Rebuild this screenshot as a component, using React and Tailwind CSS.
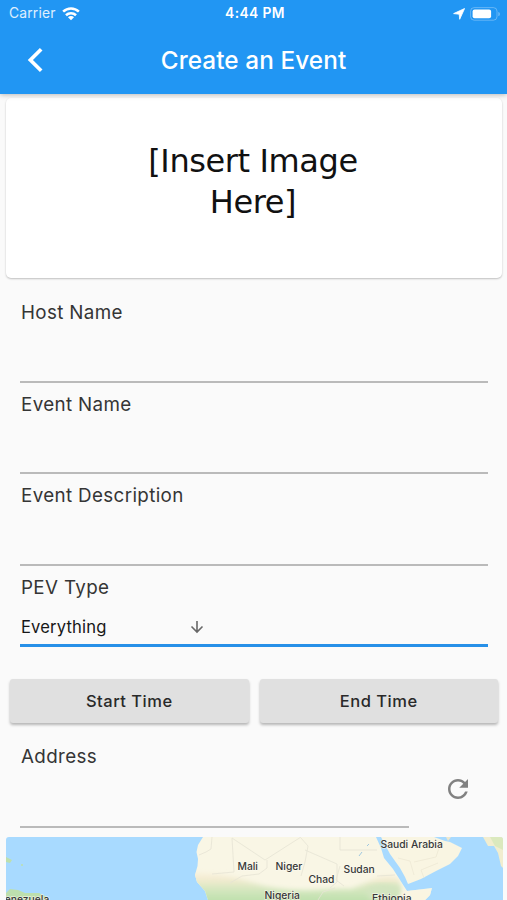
import React from "react";

function StatusBar() {
  return (
    <div className="flex h-[27px] items-center px-[9px] text-[13.8px] text-white">
      <div className="flex flex-1 items-center gap-[6px]">
        <span className="tracking-[0.2px] text-white/85">Carrier</span>
        <svg width="18" height="15" viewBox="0 0 19 15" fill="none" stroke="white" strokeWidth="2.7">
          <path d="M1.2 5.6a12 12 0 0 1 16.600 0" />
          <path d="M4.200 9.300a7.700 7.700 0 0 1 10.600 0" />
          <path d="M9.500 14.600 6.300 11.500a4.500 4.500 0 0 1 6.400 0Z" fill="white" stroke="none" />
        </svg>
      </div>
      <span className="text-[13.8px] font-semibold tracking-[0.4px]">4:44 PM</span>
      <div className="flex flex-1 items-center justify-end gap-[5px] -mr-[3px]">
        <svg width="12" height="12" viewBox="0 0 12 12">
          <path d="M11.6.5 6.700 11.300 6.200 6.200.6 5.600Z" fill="white" stroke="white" strokeWidth=".8" strokeLinejoin="round" />
        </svg>
        <svg width="31" height="14" viewBox="0 0 31 14">
          <rect x=".6" y=".6" width="26.4" height="12.6" rx="3.6" fill="none" stroke="white" strokeOpacity=".3" />
          <rect x="2.6" y="2.5" width="18.5" height="8.8" rx="2" fill="white" />
          <path d="M28.400 4.900v4.200c1.900-.5 1.900-3.700 0-4.200Z" fill="white" fillOpacity=".4" />
        </svg>
      </div>
    </div>
  );
}

function Header() {
  return (
    <header className="relative z-10 h-[94px] bg-[#2196f3] shadow-[0_1px_5px_rgba(0,0,0,0.26)]">
      <StatusBar />
      <div className="flex h-[66px] items-center text-white">
        <svg className="ml-[27px]" width="17" height="26" viewBox="0 0 17 26" fill="none" stroke="white" strokeWidth="3.7">
          <path d="M14.200 2.300 3.400 13l10.800 10.700" />
        </svg>
        <h1 className="flex-1 pr-[44px] text-center text-[24.3px] font-medium tracking-[0.1px]">Create an Event</h1>
      </div>
    </header>
  );
}

function Label({ children }) {
  return (
    <span className="mt-[8px] block pl-px text-[18.8px] leading-[27px] tracking-[0.36px] text-[#353535]">{children}</span>
  );
}

function Field({ label }) {
  return (
    <label className="flex h-[91.7px] flex-col border-b-2 border-[#bababa]">
      <Label>{label}</Label>
    </label>
  );
}

function RaisedButton({ children }) {
  return (
    <button className="h-[44px] flex-1 rounded-[3px] bg-[#e0e0e0] text-[16.5px] font-medium tracking-[0.5px] text-[#292929] shadow-[0_2px_3px_rgba(0,0,0,0.28)]">
      {children}
    </button>
  );
}

function WorldMap() {
  return (
    <svg className="ml-[6px] block rounded-t-[3px]" width="497" height="63" viewBox="6 837 497 63">
      <defs>
        <linearGradient id="savanna" x1="0" y1="870" x2="0" y2="900" gradientUnits="userSpaceOnUse">
          <stop offset="0" stopColor="#f9f5e3" />
          <stop offset=".3" stopColor="#f4ebd1" />
          <stop offset=".65" stopColor="#d5e7bf" />
          <stop offset="1" stopColor="#bfe0ae" />
        </linearGradient>
        <filter id="soften"><feGaussianBlur stdDeviation="2.5" /></filter>
        <clipPath id="africa">
          <path d="M203 837 198 845 196.500 852 198 859 197.500 866 195 875 197 882 205 891 208 900H425L430 895 432 888 407 891 400 880 393 869 384 858 381 848 376 837Z" />
        </clipPath>
      </defs>
      <rect x="6" y="837" width="497" height="63" fill="#a8daff" />
      <g clipPath="url(#africa)">
        <rect x="190" y="837" width="250" height="63" fill="#f9f6e5" />
        <path d="M188 872 Q220 872 250 882 T315 890 350 889 370 881 400 880V910H188Z" fill="url(#savanna)" filter="url(#soften)" />
        <path d="M405 890H440V905H395Z" fill="#faf5e1" filter="url(#soften)" />
        <path d="M365 889Q382 879 402 888L390 900H370Z" fill="#d3e5c0" filter="url(#soften)" />
        <g fill="none" stroke="#e6e3d4" strokeWidth=".8">
          <path d="m212 837-1 12-5 3-7 3M232 838l2 34-22 2M232 838l33 22 25-16 11-7M267 860v8l-8 6-17 2-12 7M301 838l7 8-3 16-4 14M305 850l32 14v18l-7 6M340 837v13h37M318 900l5-8 12-4M340 866l-4 14 8 6M377 876l18-1" />
        </g>
        <path d="m367 846 2-2M359 856l3-4" stroke="#9fc7df" />
      </g>
      <path d="M381 837H434L445 841 450 842 454 844 462 848 458 856 450 864 436 871 421 879 408 884 405 877 400 868 390 854Z" fill="#f9f5e2" />
      <path d="m398 858 12 3 4 14M414 862l22-5 4-12M424 878l-3-8 17-7" fill="none" stroke="#eee8d4" strokeWidth=".8" />
      <path d="M446 837H451L448 841Z" fill="#eee8cd" />
      <path d="M483 837 488 846 494 846 498 853 501 866 503 868V837Z" fill="#f1edcf" />
      <path d="M490 837 495 846 503 850V837Z" fill="#dbe9be" />
      <path d="M6 857 12 860 10 863 6 862ZM6 893 10 889 18 890 25 893 39 893 47 897 49 900H6Z" fill="#bddfae" />
      <circle cx="22" cy="865" r="1" fill="#bddfae" />
      <g fill="#373839" fontSize="10.3" fontWeight="500" stroke="#fcfaf0" strokeWidth="1.3" strokeOpacity=".7" paintOrder="stroke">
        <text x="237.500" y="869.500">Mali</text>
        <text x="275.500" y="869.500">Niger</text>
        <text x="308.500" y="883">Chad</text>
        <text x="264.500" y="899">Nigeria</text>
        <text x="343.500" y="872.500">Sudan</text>
        <text x="380.500" y="847.500">Saudi Arabia</text>
        <text x="372" y="901.500">Ethiopia</text>
        <text x="-2" y="902.500">Venezuela</text>
      </g>
    </svg>
  );
}

export default function App() {
  return (
    <div className="h-[900px] w-[507px] overflow-hidden bg-[#fafafa] font-['Inter',sans-serif]">
      <Header />
      <section className="ml-[6px] mr-[5px] mt-[4px] h-[180px] rounded-[5px] bg-white pt-[43px] text-center font-['DejaVu_Sans',sans-serif] text-[32px] leading-[40.5px] tracking-[-0.4px] text-[#111] shadow-[0_1px_2px_rgba(0,0,0,0.24)]">
        <p className="pr-[2px]">[Insert Image<br />Here]</p>
      </section>
      <main>
        <div className="mr-[19px] ml-[20px] mt-[13px]">
          <Field label="Host Name" />
          <Field label="Event Name" />
          <Field label="Event Description" />
          <div className="flex h-[81px] flex-col border-b-[3px] border-[#2790e8]">
            <Label>PEV Type</Label>
            <div className="mt-[13px] flex h-[26px] w-[184px] items-center justify-between pl-px text-[16.6px] tracking-[0.15px] text-[#171717]">
              <span>Everything</span>
              <svg width="14" height="14" viewBox="0 0 14 14" fill="none" stroke="#686868" strokeWidth="1.6">
                <path d="M7 1v11M1.500 6.500 7 12l5.500-5.500" />
              </svg>
            </div>
          </div>
        </div>
        <div className="ml-[10px] mt-[32px] mr-[9px] flex gap-[11px]">
          <RaisedButton>Start Time</RaisedButton>
          <RaisedButton>End Time</RaisedButton>
        </div>
        <div className="mt-[12px] ml-[20px] flex h-[93px]">
          <div className="flex w-[389px] flex-col border-b-2 border-[#bababa]">
            <Label>Address</Label>
          </div>
          <svg className="mt-[39px] ml-[34px]" width="30" height="30" viewBox="0 0 24 24" fill="#818181">
            <path d="M17.650 6.350C16.200 4.900 14.210 4 12 4c-4.420 0-7.990 3.580-7.990 8s3.570 8 7.990 8c3.730 0 6.840-2.550 7.730-6h-2.080c-.82 2.330-3.040 4-5.650 4-3.310 0-6-2.690-6-6s2.690-6 6-6c1.660 0 3.140.69 4.220 1.780L13 11h7V4l-2.350 2.350z" />
          </svg>
        </div>
        <div className="mt-[9px]"><WorldMap /></div>
      </main>
    </div>
  );
}
